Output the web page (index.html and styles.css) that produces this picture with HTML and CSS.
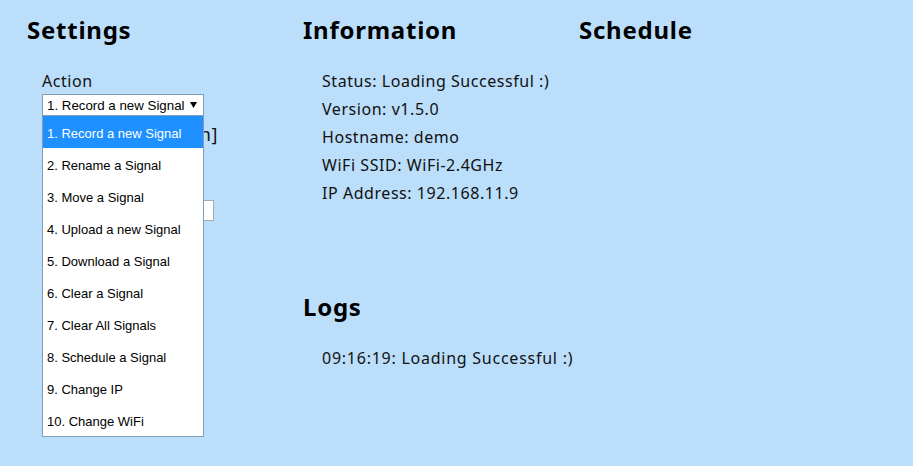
FILE: index.html
```html
<!DOCTYPE html>
<html>
<head>
<meta charset="utf-8">
<link rel="stylesheet" href="styles.css">
</head>
<body>
<div class="page">
  <section class="col">
    <h2 class="title">Settings</h2>
    <div class="settings">
      <div class="label">Action</div>
      <div class="select-wrap">
        <div class="select">
          <span>1. Record a new Signal</span>
          <svg class="arrow" width="7" height="6" viewBox="0 0 7 6"><path d="M0 0H7L3.5 6Z" fill="#000"/></svg>
        </div>
        <ul class="menu">
          <li class="active">1. Record a new Signal</li>
          <li>2. Rename a Signal</li>
          <li>3. Move a Signal</li>
          <li>4. Upload a new Signal</li>
          <li>5. Download a Signal</li>
          <li>6. Clear a Signal</li>
          <li>7. Clear All Signals</li>
          <li>8. Schedule a Signal</li>
          <li>9. Change IP</li>
          <li>10. Change WiFi</li>
        </ul>
      </div>
      <div class="hint">[Press Button]</div>
      <input class="field" type="text">
    </div>
  </section>
  <section class="col">
    <h2 class="title">Information</h2>
    <div class="info">
      <div class="line">Status: Loading Successful :)</div>
      <div class="line">Version: v1.5.0</div>
      <div class="line">Hostname: demo</div>
      <div class="line">WiFi SSID: WiFi-2.4GHz</div>
      <div class="line">IP Address: 192.168.11.9</div>
    </div>
    <h2 class="title logs-title">Logs</h2>
    <div class="info">
      <div class="line log">09:16:19: Loading Successful :)</div>
    </div>
  </section>
  <section class="col">
    <h2 class="title">Schedule</h2>
  </section>
</div>
</body>
</html>
```

FILE: styles.css
```css
html, body {
  margin: 0;
  padding: 0;
}
body {
  background: #bbdefb;
  color: #111;
  font-family: "Noto Sans", "DejaVu Sans", sans-serif;
  font-size: 16px;
  letter-spacing: 0.55px;
  width: 913px;
  height: 466px;
  overflow: hidden;
}
.page {
  display: flex;
  padding-left: 8px;
}
.col {
  width: 276px;
  padding-left: 19px;
  box-sizing: border-box;
}
.title {
  margin: 14px 0 0;
  font-size: 24px;
  line-height: 32px;
  font-weight: bold;
  letter-spacing: 0.75px;
  color: #000;
  white-space: nowrap;
}
.settings {
  padding-left: 15px;
  margin-top: 21px;
}
.label {
  line-height: 28px;
}
.select-wrap {
  position: relative;
  width: 162px;
  margin-top: -1px;
}
.select {
  box-sizing: border-box;
  width: 162px;
  height: 22px;
  background: #fff;
  border: 1px solid #7f9db9;
  display: flex;
  align-items: center;
  justify-content: space-between;
  padding: 0 6px 0 4px;
  font-family: "Liberation Sans", Arial, sans-serif;
  font-size: 13.3px;
  letter-spacing: 0;
  color: #000;
}
.arrow {
  display: block;
}
.menu {
  position: absolute;
  left: 0;
  top: 22px;
  width: 162px;
  box-sizing: border-box;
  margin: 0;
  padding: 0;
  list-style: none;
  background: #fff;
  border: 1px solid #7f9db9;
  border-top: none;
  z-index: 2;
  font-family: "Liberation Sans", Arial, sans-serif;
  font-size: 13px;
  letter-spacing: 0;
  color: #000;
}
.menu li {
  box-sizing: border-box;
  height: 32px;
  line-height: 28px;
  padding: 4px 0 0 4px;
  white-space: nowrap;
}
.menu li.active {
  background: #1e90ff;
  color: #fff;
}
.hint {
  width: 176px;
  text-align: right;
  font-size: 18px;
  line-height: 26px;
  margin-top: 5px;
  white-space: nowrap;
}
.field {
  display: block;
  box-sizing: border-box;
  width: 172px;
  height: 21px;
  margin: 53px 0 0;
  border: 1px solid #aaa;
  background: #fff;
}
.info {
  padding-left: 19px;
  margin-top: 21px;
}
.line {
  line-height: 28px;
  white-space: nowrap;
}
.log {
  letter-spacing: 0.75px;
}
.logs-title {
  margin-top: 84px;
}
```
